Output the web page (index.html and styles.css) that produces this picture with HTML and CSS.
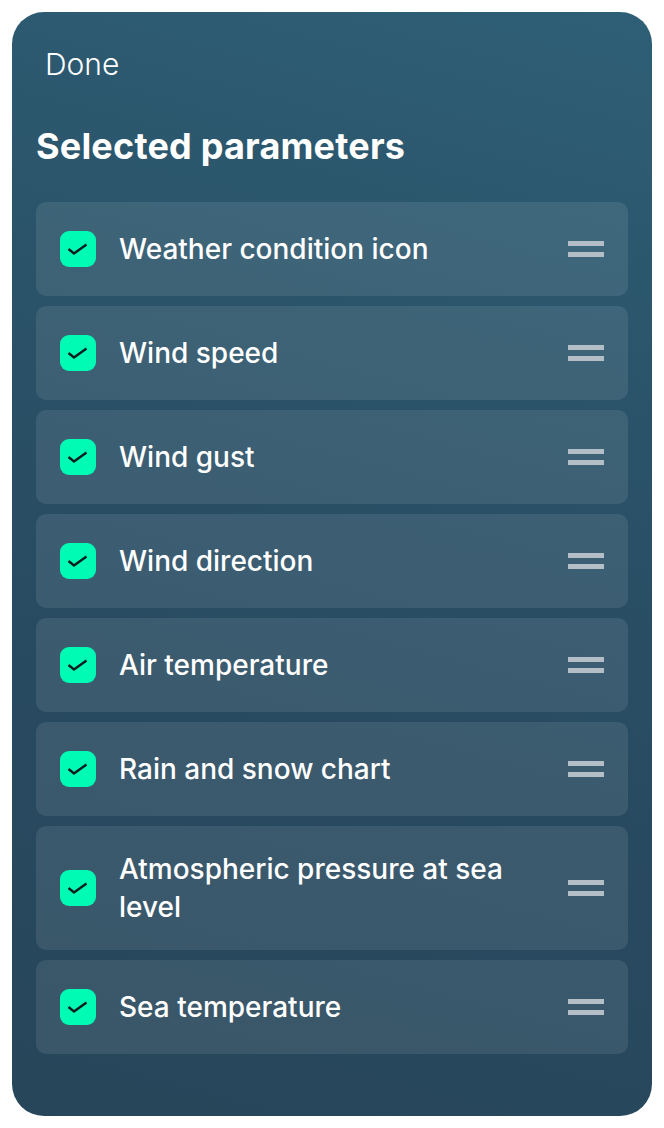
FILE: index.html
```html
<!DOCTYPE html>
<html lang="en">
<head>
<meta charset="utf-8">
<title>Selected parameters</title>
<link rel="stylesheet" href="styles.css">
</head>
<body>
<div class="sheet">
  <div class="done">Done</div>
  <h1 class="title">Selected parameters</h1>
  <ul class="list">
    <li class="row"><span class="check"><svg viewBox="0 0 36 36" width="36" height="36"><path d="M8.5 18 L14 22.5 L26.5 13.5" fill="none" stroke="#0a1f1c" stroke-width="2.4"/></svg></span><span class="label">Weather condition icon</span><span class="handle"><i></i><i></i></span></li>
    <li class="row"><span class="check"><svg viewBox="0 0 36 36" width="36" height="36"><path d="M8.5 18 L14 22.5 L26.5 13.5" fill="none" stroke="#0a1f1c" stroke-width="2.4"/></svg></span><span class="label">Wind speed</span><span class="handle"><i></i><i></i></span></li>
    <li class="row"><span class="check"><svg viewBox="0 0 36 36" width="36" height="36"><path d="M8.5 18 L14 22.5 L26.5 13.5" fill="none" stroke="#0a1f1c" stroke-width="2.4"/></svg></span><span class="label">Wind gust</span><span class="handle"><i></i><i></i></span></li>
    <li class="row"><span class="check"><svg viewBox="0 0 36 36" width="36" height="36"><path d="M8.5 18 L14 22.5 L26.5 13.5" fill="none" stroke="#0a1f1c" stroke-width="2.4"/></svg></span><span class="label">Wind direction</span><span class="handle"><i></i><i></i></span></li>
    <li class="row"><span class="check"><svg viewBox="0 0 36 36" width="36" height="36"><path d="M8.5 18 L14 22.5 L26.5 13.5" fill="none" stroke="#0a1f1c" stroke-width="2.4"/></svg></span><span class="label">Air temperature</span><span class="handle"><i></i><i></i></span></li>
    <li class="row"><span class="check"><svg viewBox="0 0 36 36" width="36" height="36"><path d="M8.5 18 L14 22.5 L26.5 13.5" fill="none" stroke="#0a1f1c" stroke-width="2.4"/></svg></span><span class="label">Rain and snow chart</span><span class="handle"><i></i><i></i></span></li>
    <li class="row"><span class="check"><svg viewBox="0 0 36 36" width="36" height="36"><path d="M8.5 18 L14 22.5 L26.5 13.5" fill="none" stroke="#0a1f1c" stroke-width="2.4"/></svg></span><span class="label">Atmospheric pressure at sea level</span><span class="handle"><i></i><i></i></span></li>
    <li class="row"><span class="check"><svg viewBox="0 0 36 36" width="36" height="36"><path d="M8.5 18 L14 22.5 L26.5 13.5" fill="none" stroke="#0a1f1c" stroke-width="2.4"/></svg></span><span class="label">Sea temperature</span><span class="handle"><i></i><i></i></span></li>
  </ul>
</div>
</body>
</html>
```

FILE: styles.css
```css
* { box-sizing: border-box; }
html, body { margin: 0; padding: 0; background: #ffffff; }
body { font-family: "Inter", "Liberation Sans", sans-serif; color: #ffffff; }

.sheet {
  margin: 12px;
  width: 640px;
  height: 1104px;
  border-radius: 32px;
  background: linear-gradient(195deg, #2e5f76 0%, #2a5268 35%, #284a60 65%, #27465a 100%);
  padding: 34px 24px 0 24px;
  display: flex;
  flex-direction: column;
}

.done {
  font-size: 30px;
  font-weight: 300;
  line-height: 36px;
  padding-left: 9px;
}

.title {
  margin: 42px 0 0 0;
  font-size: 36px;
  font-weight: 700;
  line-height: 44px;
  letter-spacing: 0.2px;
}

.list {
  list-style: none;
  margin: 34px 0 0 0;
  padding: 0;
  display: flex;
  flex-direction: column;
  gap: 10px;
}

.row {
  display: flex;
  align-items: center;
  min-height: 94px;
  padding: 24px 24px 24px 24px;
  border-radius: 10px;
  background: rgba(255, 255, 255, 0.09);
}

.check {
  flex: none;
  width: 36px;
  height: 36px;
  border-radius: 9px;
  background: #00fbb5;
  display: flex;
}

.label {
  flex: 1;
  margin-left: 23px;
  margin-right: 40px;
  font-size: 28px;
  font-weight: 500;
  line-height: 38px;
}

.handle {
  flex: none;
  width: 36px;
  display: flex;
  flex-direction: column;
  gap: 6.5px;
}

.handle i {
  display: block;
  height: 4.5px;
  background: #b3bec6;
}
```
